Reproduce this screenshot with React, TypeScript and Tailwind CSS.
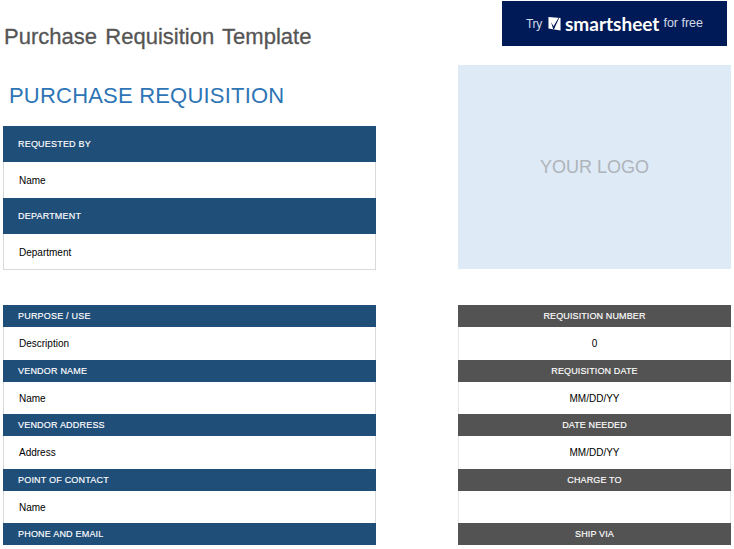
const font = "font-['Liberation_Sans',Arial,sans-serif]";

function BlueHead({ label, tall }: { label: string; tall?: boolean }) {
  return (
    <div className={`flex items-center bg-[#1f4e79] pt-0.5 pl-[15px] text-[9px] tracking-[0.2px] text-white [-webkit-text-stroke:0.15px_#ffffff] ${tall ? 'h-9' : 'h-[22px]'}`}>
      {label}
    </div>
  );
}

function BlueRow({ label, tall }: { label: string; tall?: boolean }) {
  return (
    <div className={`flex items-center border-x border-[#d9d9d9] bg-white pl-[15px] text-[10px] text-black ${tall ? 'h-9' : 'h-[32.5px] pt-px'}`}>
      {label}
    </div>
  );
}

function GrayHead({ label }: { label: string }) {
  return (
    <div className="flex h-[22px] items-center justify-center bg-[#535353] pt-0.5 text-[9px] tracking-[0.12px] text-white [-webkit-text-stroke:0.15px_#ffffff]">
      {label}
    </div>
  );
}

function GrayRow({ label }: { label: string }) {
  return (
    <div className="flex h-[32.5px] items-center justify-center border-x border-[#e6e6e6] bg-white pt-px text-[10px] text-black">
      {label}
    </div>
  );
}

function CheckLogo() {
  return (
    <svg width="13" height="15" viewBox="0 0 14 16" className="block shrink-0">
      <path d="M0.5 1 L13.5 2 V15.5 L0.5 13.5 Z" fill="#ffffff" />
      <path d="M3.2 6.5 L6 11 L11.5 1.5 L12 2 L6.6 14 L5.6 14 Z" fill="#001a57" />
    </svg>
  );
}

export default function App() {
  return (
    <div className={`h-[549px] w-[734px] overflow-hidden bg-white pl-[3px] ${font}`}>
      <div className="grid grid-cols-[373px_273px] gap-x-[82px]">
        {/* left top */}
        <div>
          <h1 className="flex h-[72px] items-center pt-0.5 pl-px text-[22px] leading-none font-normal tracking-[0.02px] text-[#555555] [word-spacing:2px] [-webkit-text-stroke:0.3px_#555555]">
            Purchase Requisition Template
          </h1>
          <h2 className="flex h-[54px] items-center pb-1.5 pl-1.5 text-[22px] leading-none font-normal tracking-[0.2px] text-[#2e75b6]">
            PURCHASE REQUISITION
          </h2>
          <div className="h-36 overflow-hidden border-b border-[#d9d9d9]">
            <BlueHead label="REQUESTED BY" tall />
            <BlueRow label="Name" tall />
            <BlueHead label="DEPARTMENT" tall />
            <BlueRow label="Department" tall />
          </div>
        </div>

        {/* right top */}
        <div className="flex flex-col">
          <div className="mt-px ml-11 flex h-[45px] w-[225px] items-center bg-[#001a57] pl-6 text-white">
            <span className="w-4 text-[12px] font-light tracking-[-0.3px] whitespace-nowrap text-[#d5dae8]">Try</span>
            <span className="ml-1.5"><CheckLogo /></span>
            <span className="ml-1 font-['Lato',sans-serif] text-[19px] leading-none font-bold">smartsheet</span>
            <span className="ml-1 text-[12.5px] text-[#d5dae8]">for free</span>
          </div>
          <div className="mt-[19px] flex h-[204px] items-center justify-center bg-[#deeaf6] text-[18px] text-[#aeb4ba]">
            YOUR LOGO
          </div>
        </div>

        {/* left bottom */}
        <div className="mt-[35px]">
          <BlueHead label="PURPOSE / USE" />
          <BlueRow label="Description" />
          <BlueHead label="VENDOR NAME" />
          <BlueRow label="Name" />
          <BlueHead label="VENDOR ADDRESS" />
          <BlueRow label="Address" />
          <BlueHead label="POINT OF CONTACT" />
          <BlueRow label="Name" />
          <BlueHead label="PHONE AND EMAIL" />
        </div>

        {/* right bottom */}
        <div className="mt-[35px]">
          <GrayHead label="REQUISITION NUMBER" />
          <GrayRow label="0" />
          <GrayHead label="REQUISITION DATE" />
          <GrayRow label="MM/DD/YY" />
          <GrayHead label="DATE NEEDED" />
          <GrayRow label="MM/DD/YY" />
          <GrayHead label="CHARGE TO" />
          <GrayRow label="" />
          <GrayHead label="SHIP VIA" />
        </div>
      </div>
    </div>
  );
}
